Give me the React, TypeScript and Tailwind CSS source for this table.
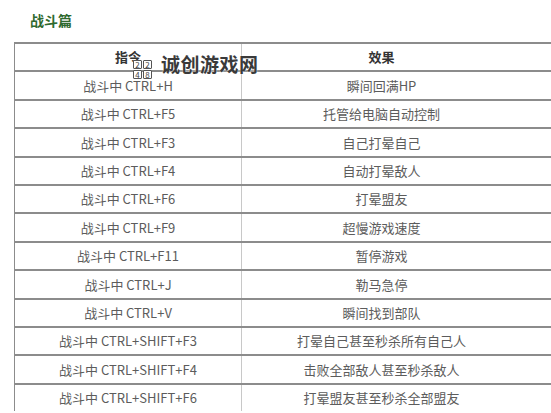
import React from "react";

const rows: [string, string][] = [
  ["战斗中 CTRL+H", "瞬间回满HP"],
  ["战斗中 CTRL+F5", "托管给电脑自动控制"],
  ["战斗中 CTRL+F3", "自己打晕自己"],
  ["战斗中 CTRL+F4", "自动打晕敌人"],
  ["战斗中 CTRL+F6", "打晕盟友"],
  ["战斗中 CTRL+F9", "超慢游戏速度"],
  ["战斗中 CTRL+F11", "暂停游戏"],
  ["战斗中 CTRL+J", "勒马急停"],
  ["战斗中 CTRL+V", "瞬间找到部队"],
  ["战斗中 CTRL+SHIFT+F3", "打晕自己甚至秒杀所有自己人"],
  ["战斗中 CTRL+SHIFT+F4", "击败全部敌人甚至秒杀敌人"],
  ["战斗中 CTRL+SHIFT+F6", "打晕盟友甚至秒杀全部盟友"],
];

const font = { fontFamily: '"Noto Sans CJK SC", "Noto Sans", sans-serif' };

function Row({ left, right, head }: { left: string; right: string; head?: boolean }) {
  const tone = head ? "font-bold text-[#333]" : "text-[#5c5c5c]";
  return (
    <div className="flex h-[28.4px] shrink-0 border-t-2 border-[#8c8c8c]">
      <div className={`w-[227px] flex items-center justify-center border-l-[1.5px] border-[#8c8c8c] text-[13px] ${tone}`}>
        {left}
      </div>
      <div className={`w-[280px] flex items-center justify-center border-l border-[#c8c8c8] text-[13px] ${tone}`}>
        {right}
      </div>
    </div>
  );
}

function Watermark() {
  return (
    <div className="absolute left-[133px] top-[51px] flex items-start gap-[9px]">
      <div className="mt-[9px] grid grid-cols-2 gap-[1px]">
        {["2", "2", "4", "8"].map((d, i) => (
          <div
            key={i}
            className="w-[9px] h-[9px] border border-[#555] rounded-[1px] bg-white flex items-center justify-center text-[8px] leading-none text-[#444]"
          >
            {d}
          </div>
        ))}
      </div>
      <div className="text-[19px] leading-[26px] font-bold text-[#3a3a3a] tracking-[0.5px] [text-shadow:0_0_2px_#fff]">
        诚创游戏网
      </div>
    </div>
  );
}

export default function App() {
  return (
    <div className="relative w-[551px] h-[413px] overflow-hidden bg-white" style={font}>
      <div className="pt-[10px] pl-[30px] h-[42px]">
        <h2 className="text-[14px] font-bold text-[#2f6a2f] leading-[20px]">战斗篇</h2>
      </div>
      <div className="ml-[14px] flex flex-col">
        <Row left="指令" right="效果" head />
        {rows.map(([l, r]) => (
          <Row key={l} left={l} right={r} />
        ))}
      </div>
      <Watermark />
    </div>
  );
}
